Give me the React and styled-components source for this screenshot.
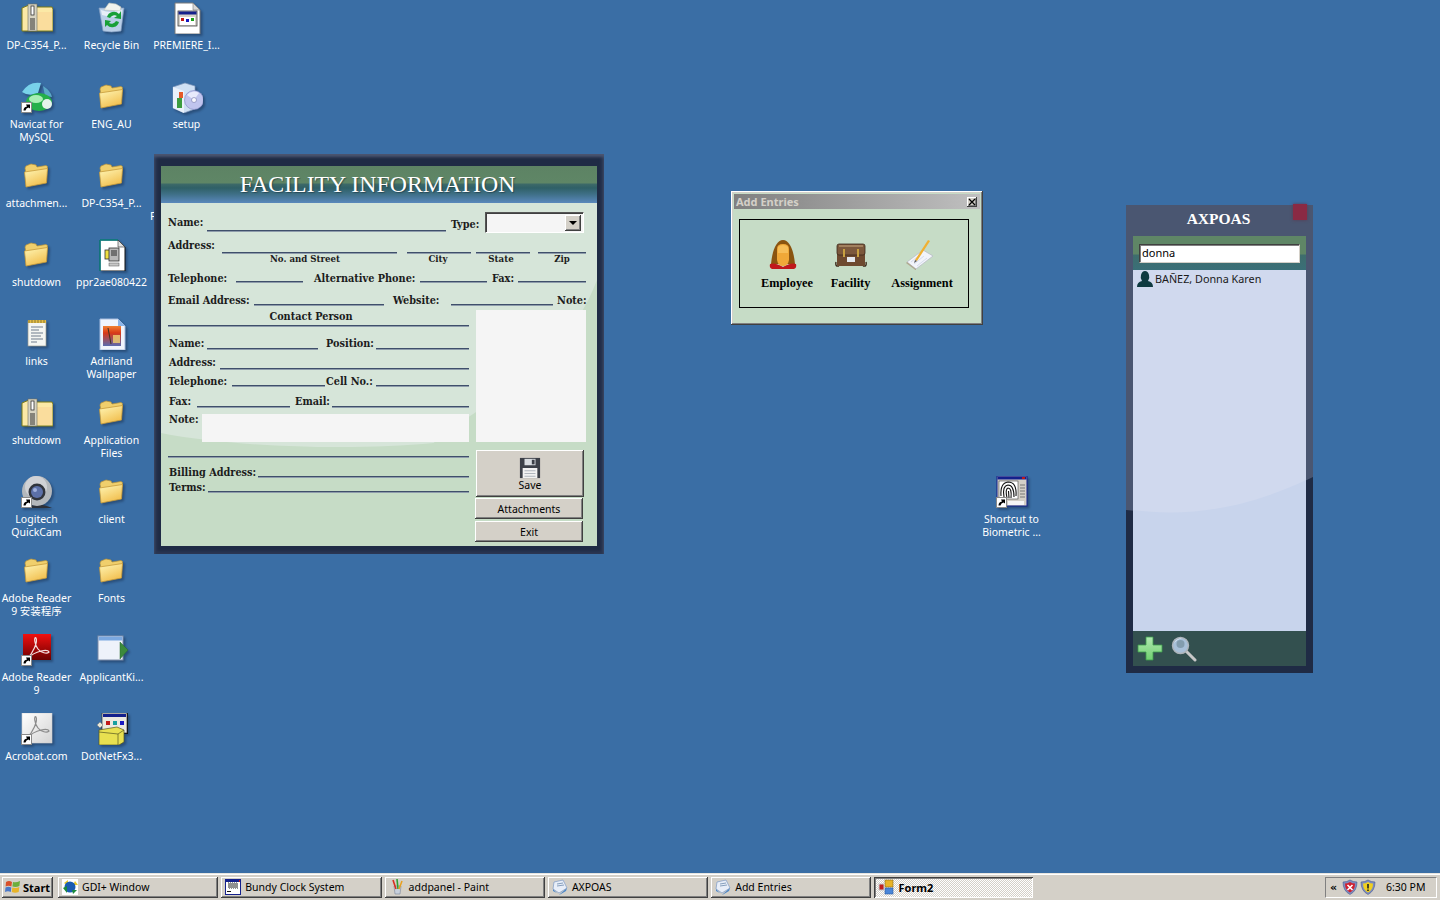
import React from 'react';
import styled, { createGlobalStyle } from 'styled-components';

const GlobalStyle = createGlobalStyle`
  html, body {
    margin: 0;
    height: 100%;
    overflow: hidden;
    background: #3a6ea5;
  }
  body {
    font-family: "Noto Sans", "Noto Sans CJK SC", sans-serif;
    font-size: 10.5px;
  }
`

const UI_FONT = '"Noto Sans", "Noto Sans CJK SC", sans-serif'
const SLAB_FONT = '"DejaVu Serif Condensed", "DejaVu Serif", serif'

const raised = `
  background: #d4d0c8;
  box-shadow: inset -1px -1px #404040, inset 1px 1px #ffffff, inset -2px -2px #808080, inset 2px 2px #d4d0c8;
`

/* ---------- desktop ---------- */
const Screen = styled.div`
  position: relative;
  width: 1440px;
  height: 900px;
  overflow: hidden;
  background: #3a6ea5;
`
const IconGrid = styled.div`
  display: grid;
  grid-template-rows: repeat(10, 79px);
  grid-auto-columns: 75px;
  grid-auto-flow: column;
  padding-top: 2px;
  margin-left: -1px;
  width: max-content;
`
const IconCell = styled.div`
  display: flex;
  flex-direction: column;
  align-items: center;
  width: 75px;
  ${p => p.$free && `
    position: absolute;
    left: ${p.$x}px;
    top: ${p.$y}px;
  `}
`
const IconBox = styled.div`
  position: relative;
  width: 32px;
  height: 32px;
  filter: drop-shadow(2px 2px 1px rgba(20, 40, 70, 0.45));
  svg { display: block; }
`
const ShortcutBadge = styled.svg`
  position: absolute;
  left: 0;
  bottom: 0;
`
const IconLabel = styled.div`
  margin-top: 5px;
  width: 73px;
  color: #ffffff;
  text-align: center;
  font-size: 10.5px;
  line-height: 13px;
`
const StrayLetter = styled.div`
  position: absolute;
  left: 150px;
  top: 209px;
  color: #ffffff;
  font-size: 11px;
  line-height: 13px;
`

/* ---------- facility form ---------- */
const FormFrame = styled.div`
  position: absolute;
  left: 154px;
  top: 154px;
  box-sizing: border-box;
  width: 450px;
  height: 400px;
  padding: 12px 7px 8px 7px;
  background: #1f2b45;
  box-shadow: inset 0 3px 3px #4b5671, inset 3px 0 3px #2b3753, inset -3px 0 3px #2b3753, inset 0 -3px 3px #2b3753;
`
const FormInner = styled.div`
  position: relative;
  display: flex;
  flex-direction: column;
  height: 380px;
  background: #d6e5d9;
`
const FormHeader = styled.div`
  display: flex;
  justify-content: center;
  align-items: center;
  height: 37px;
  padding-right: 3px;
  background: linear-gradient(#5d8364 0, #5f8666 17px, #3d6a68 18px, #2f6067 22px, #3e6f86 28px, #5a88bc 37px);
  color: #ffffff;
  font-family: "Liberation Serif", serif;
  font-size: 23.8px;
  line-height: 37px;
  text-shadow: 1px 1px 1px rgba(20, 40, 50, 0.5);
  white-space: nowrap;
  position: relative;
  z-index: 1;
`
const WaveSvg = styled.svg`
  position: absolute;
  left: 0;
  top: 0;
  width: 100%;
  height: 100%;
`
const FormBody = styled.div`
  position: relative;
  z-index: 1;
  padding: 9px 0 0 7px;
  font-family: ${SLAB_FONT};
  font-size: 10.8px;
  font-weight: 700;
  color: #1c1c1c;
`
const Row = styled.div`
  display: flex;
  height: ${p => p.$h}px;
`
const Label = styled.div`
  box-sizing: border-box;
  flex: none;
  width: ${p => p.$w}px;
  height: 14px;
  margin-top: ${p => p.$top || 0}px;
  margin-left: ${p => p.$ml || 0}px;
  line-height: 16px;
  white-space: nowrap;
`
const Line = styled.div`
  flex: none;
  box-sizing: border-box;
  width: ${p => p.$w}px;
  height: 2px;
  margin-top: ${p => p.$top || 0}px;
  margin-left: ${p => p.$ml || 0}px;
  background: #3f4f6b;
  border-bottom: 1px solid #8e9cab;
`
const Caption = styled.div`
  flex: none;
  width: ${p => p.$w}px;
  margin-left: ${p => p.$ml || 0}px;
  text-align: center;
  font-size: 9.6px;
  line-height: 10px;
  white-space: nowrap;
`
const Select = styled.div`
  box-sizing: border-box;
  display: flex;
  justify-content: flex-end;
  align-items: center;
  width: 99px;
  height: 21px;
  padding: 2px;
  background: #f5f5f5;
  border: 1px solid;
  border-color: #555555 #ffffff #ffffff #555555;
  box-shadow: inset 1px 1px #404040;
`
const SelectArrow = styled.div`
  ${raised}
  display: flex;
  align-items: center;
  justify-content: center;
  width: 16px;
  height: 16px;
  &::after {
    content: '';
    border: 4px solid transparent;
    border-top: 4px solid #000000;
    border-bottom: 0;
  }
`
const Columns = styled.div`
  display: flex;
  gap: 6px;
`
const LeftCol = styled.div`
  width: 301px;
  flex: none;
`
const RightCol = styled.div`
  display: flex;
  flex-direction: column;
  width: 111px;
  flex: none;
`
const Heading = styled.div`
  height: 17px;
  padding-right: 15px;
  text-align: center;
  line-height: 18px;
`
const WhiteBox = styled.div`
  flex: none;
  width: ${p => p.$w}px;
  height: ${p => p.$h}px;
  margin-top: ${p => p.$top || 0}px;
  margin-left: ${p => p.$ml || 0}px;
  background: #f5f5f5;
`
const Button = styled.div`
  ${raised}
  display: flex;
  flex-direction: column;
  align-items: center;
  justify-content: center;
  box-sizing: border-box;
  width: 108px;
  height: ${p => p.$h}px;
  padding-top: 1px;
  margin-top: ${p => p.$top || 0}px;
  margin-left: ${p => p.$ml || 0}px;
  font-family: ${UI_FONT};
  font-weight: 400;
  font-size: 10.5px;
  line-height: 13px;
  color: #000000;
`

/* ---------- add entries ---------- */
const AddWindow = styled.div`
  position: absolute;
  left: 731px;
  top: 191px;
  box-sizing: border-box;
  width: 252px;
  height: 134px;
  padding: 3px;
  background: #c6dcc6;
  box-shadow: inset -1px -1px #404040, inset 1px 1px #ffffff, inset -2px -2px #808080, inset 2px 2px #d4d0c8;
`
const TitleBar = styled.div`
  display: flex;
  align-items: center;
  justify-content: space-between;
  height: 15px;
  padding: 0 3px 0 2px;
  background: linear-gradient(90deg, #808080, #c0c0c0);
  color: #d4d0c8;
  font-family: ${UI_FONT};
  font-size: 11px;
  font-weight: 700;
  line-height: 15px;
`
const CloseButton = styled.div`
  ${raised}
  display: flex;
  align-items: center;
  justify-content: center;
  width: 10px;
  height: 10px;
`
const EntryBox = styled.div`
  box-sizing: border-box;
  display: flex;
  gap: 18px;
  height: 89px;
  margin: 10px 11px 0 5px;
  padding: 18px 0 0 22px;
  border: 1px solid #000000;
`
const Entry = styled.div`
  display: flex;
  flex-direction: column;
  align-items: center;
  gap: 6px;
  width: ${p => p.$w}px;
  font-family: "Liberation Serif", serif;
  font-size: 12.3px;
  font-weight: 700;
  line-height: 14px;
  color: #000000;
  white-space: nowrap;
  svg {
    transform: translateX(${p => p.$shift || 0}px);
  }
`

/* ---------- axpoas panel ---------- */
const Panel = styled.div`
  position: absolute;
  left: 1126px;
  top: 205px;
  box-sizing: border-box;
  display: flex;
  flex-direction: column;
  width: 187px;
  height: 468px;
  padding: 0 7px 7px 7px;
  background: #4a5671;
`
const PanelTitle = styled.div`
  position: relative;
  height: 31px;
  padding-top: 1px;
  padding-right: 2px;
  box-sizing: border-box;
  text-align: center;
  color: #ffffff;
  font-family: "Liberation Serif", serif;
  font-size: 15.5px;
  font-weight: 700;
  line-height: 26px;
`
const PanelClose = styled.div`
  position: absolute;
  right: -1px;
  top: -1px;
  width: 14px;
  height: 16px;
  background: #8a2a44;
  box-shadow: 0 0 3px #5d3a50;
`
const SearchBar = styled.div`
  position: relative;
  box-sizing: border-box;
  height: 34px;
  padding: 8px 6px 0 6px;
  background: linear-gradient(#5f8666 0, #5f8666 18px, #3e6d6c 19px, #3a6f78 34px);
`
const SearchInput = styled.div`
  box-sizing: border-box;
  width: 161px;
  height: 19px;
  padding-left: 2px;
  background: #ffffff;
  border: 1px solid;
  border-color: #404040 #d4d0c8 #d4d0c8 #404040;
  box-shadow: inset 1px 1px #808080;
  color: #000000;
  font-size: 11px;
  line-height: 16px;
`
const List = styled.div`
  position: relative;
  flex: 1;
  background: #d0d9ee;
`
const ListRow = styled.div`
  position: relative;
  display: flex;
  align-items: center;
  gap: 2px;
  height: 17px;
  padding-left: 4px;
  color: #1a1a1a;
  font-size: 10.8px;
`
const PanelFooter = styled.div`
  position: relative;
  display: flex;
  align-items: center;
  gap: 8px;
  height: 35px;
  padding-left: 4px;
  background: #33504f;
`

/* ---------- taskbar ---------- */
const Taskbar = styled.div`
  position: absolute;
  left: 0;
  right: 0;
  bottom: 0;
  box-sizing: border-box;
  display: flex;
  gap: 3px;
  height: 27px;
  padding: 3px 3px 3px 2px;
  background: #d4d0c8;
  border-top: 1px solid #e8e6e0;
  box-shadow: inset 0 1px #ffffff;
`
const StartButton = styled.div`
  ${raised}
  display: flex;
  align-items: center;
  gap: 2px;
  box-sizing: border-box;
  width: 51px;
  height: 21px;
  margin-right: 2px;
  padding: 0 0 1px 3px;
  font-family: ${UI_FONT};
  font-size: 11px;
  font-weight: 700;
  color: #000000;
`
const TaskButton = styled.div`
  ${raised}
  display: flex;
  align-items: center;
  gap: 4px;
  box-sizing: border-box;
  width: ${p => (p.$active ? 159 : 160.3)}px;
  height: 21px;
  padding: 0 0 1px 4px;
  color: #000000;
  font-size: 10.5px;
  white-space: nowrap;
  ${p => p.$active && `
    font-size: 11px;
    font-weight: 700;
    background-color: #f0eeea;
    background-image: repeating-conic-gradient(#ffffff 0 25%, #d4d0c8 0 50%);
    background-size: 2px 2px;
    box-shadow: inset 1px 1px #404040, inset -1px -1px #ffffff, inset 2px 2px #808080;
  `}
`
const Tray = styled.div`
  display: flex;
  align-items: center;
  box-sizing: border-box;
  width: 112px;
  height: 21px;
  margin-left: auto;
  padding: 0 0 1px 4px;
  border: 1px solid;
  border-color: #808080 #ffffff #ffffff #808080;
  font-size: 10.5px;
  color: #000000;
`
const TrayChevron = styled.span`
  width: 12px;
  font-family: "DejaVu Sans", sans-serif;
  font-weight: 700;
  font-size: 11px;
`
const TrayIcons = styled.div`
  display: flex;
  gap: 2px;
`
const TrayTime = styled.span`
  margin-left: 10px;
`

/* ---------- icons ---------- */
const Svg = ({ size = 32, vb = 32, children }) => (
  <svg width={size} height={size} viewBox={`0 0 ${vb} ${vb}`}>{children}</svg>
)

const FolderIcon = () => (
  <Svg>
    <defs>
      <linearGradient id="fld" x1="0" y1="0" x2="0.5" y2="1">
        <stop offset="0" stopColor="#fff7b8" />
        <stop offset="1" stopColor="#f2c050" />
      </linearGradient>
    </defs>
    <g transform="translate(-1 -1)">
      <path d="M5 9 L6 7 L11 5 L16 6 L17 8 L26 6.5 L27.5 7.5 L27 12 L6 15 Z" fill="#f0cf6c" stroke="#b8923a" strokeWidth=".7" />
      <path d="M4.5 13 L27.5 9.5 L26.5 24 L6 28 Z" fill="url(#fld)" stroke="#c79a3a" strokeWidth=".8" />
    </g>
  </Svg>
)
const ZipIcon = () => (
  <Svg>
    <path d="M1 29 L1 6 L8 3 L14 3 L15 5 L31 5 L32 7 L32 29 Z" fill="#fbe9a6" stroke="#7c7a16" strokeWidth="1" />
    <path d="M15 10 H31 V28 H15 Z" fill="#f9d79a" opacity=".7" />
    <rect x="7" y="2" width="9" height="27" fill="#d8d4c2" stroke="#6f6f60" strokeWidth=".6" />
    <rect x="10" y="4" width="3" height="9" fill="#ffffff" stroke="#333333" strokeWidth=".8" />
    <path d="M9 17 h5 M9 19 h5 M9 21 h5 M9 23 h5 M9 25 h5 M9 27 h5" stroke="#333333" strokeWidth="1" />
  </Svg>
)
const RecycleIcon = () => (
  <Svg>
    <path d="M3 6 L28 6 L25 29 Q15 31 7 29 Z" fill="#b9cfe8" stroke="#7e99bd" strokeWidth=".7" />
    <path d="M8 8 L13 1 L20 2 L25 5 L24 9 Z" fill="#f2f4ee" stroke="#c0c4b8" strokeWidth=".6" />
    <path d="M5 8 Q15 12 26 8 L25 14 Q15 16 6 13 Z" fill="#e8eff8" />
    <path d="M11 15 A7 7 0 0 1 23 12 L25 9 L25 17 L18 16 L21 14 A5 5 0 0 0 14 16 Z M23 20 A7 7 0 0 1 11 23 L9 25 L9 18 L15 19 L13 21 A5 5 0 0 0 20 19 Z" fill="#18a038" />
  </Svg>
)
const ExeDocIcon = () => (
  <Svg>
    <path d="M4 1 H22 L29 8 V32 H4 Z" fill="#ffffff" stroke="#7a7a7a" strokeWidth="1" />
    <path d="M22 1 V8 H29 Z" fill="#d8d8d8" stroke="#7a7a7a" strokeWidth=".6" />
    <rect x="7" y="9" width="19" height="15" fill="#d4d0c8" stroke="#444444" strokeWidth=".8" />
    <rect x="7.5" y="9.5" width="18" height="3" fill="#14208c" />
    <rect x="9" y="15" width="15" height="8" fill="#ffffff" />
    <rect x="10" y="16" width="3" height="3" fill="#c01818" />
    <rect x="15" y="17" width="3" height="3" fill="#1818c0" />
    <rect x="20" y="16" width="3" height="3" fill="#18a018" />
  </Svg>
)
const NavicatIcon = () => (
  <Svg>
    <path d="M1 11 Q8 0 20 2 L17 12 Q8 16 1 11 Z" fill="#78d2ea" />
    <path d="M22 5 Q30 10 31 16 L24 15 Z" fill="#5aa8c8" />
    <ellipse cx="18" cy="21" rx="13" ry="9" fill="#24b04a" />
    <ellipse cx="15" cy="18" rx="7" ry="4" fill="#a8efb4" />
    <ellipse cx="26" cy="23" rx="5" ry="5" fill="#e4f4ec" />
  </Svg>
)
const SetupIcon = () => (
  <Svg>
    <path d="M2 6 L14 2 L24 5 L24 28 L13 32 L2 27 Z" fill="#cfe0f4" stroke="#7c95b8" strokeWidth=".7" />
    <path d="M2 6 L13 10 L13 32 L2 27 Z" fill="#e9f1fb" />
    <rect x="6" y="17" width="5" height="10" fill="#3c9c40" />
    <rect x="8" y="11" width="4" height="6" fill="#e45a2a" />
    <circle cx="23" cy="19" r="9.5" fill="#c0c4ee" stroke="#8084c0" strokeWidth=".6" />
    <path d="M23 19 L16 14 A9 9 0 0 1 28 12 Z" fill="#e8eafc" />
    <circle cx="23" cy="19" r="2.5" fill="#f8f8ff" stroke="#7074a8" strokeWidth=".6" />
  </Svg>
)
const PprIcon = () => (
  <Svg>
    <path d="M4 1 H22 L29 8 V32 H4 Z" fill="#ffffff" stroke="#111111" strokeWidth="1" />
    <path d="M4 1 H22 M4 1 V32" stroke="#0e8a8a" strokeWidth="1.4" fill="none" />
    <path d="M22 1 V8 H29 Z" fill="#e0e0e0" stroke="#333333" strokeWidth=".6" />
    <rect x="9" y="11" width="10" height="9" fill="#f0e040" stroke="#333333" strokeWidth=".8" />
    <rect x="13" y="9" width="10" height="13" fill="#b8b8b8" stroke="#333333" strokeWidth=".8" />
    <rect x="15" y="11" width="6" height="6" fill="#707070" />
    <rect x="13" y="24" width="10" height="3" fill="#c8c8c8" stroke="#555555" strokeWidth=".5" />
  </Svg>
)
const NotepadIcon = () => (
  <Svg>
    <rect x="7" y="3" width="18" height="25" fill="#f4f6f2" stroke="#9a9a90" strokeWidth=".7" />
    <rect x="7" y="2" width="18" height="3" fill="#e2bc48" />
    <path d="M8 2 v3 M11 2 v3 M14 2 v3 M17 2 v3 M20 2 v3 M23 2 v3" stroke="#7a6a28" strokeWidth=".8" />
    <path d="M10 9 h12 M10 12 h8 M10 15 h12 M10 18 h10 M10 21 h12 M10 24 h6" stroke="#6e7c8c" strokeWidth="1" />
  </Svg>
)
const ImageDocIcon = () => (
  <Svg>
    <defs>
      <linearGradient id="sun" x1="0" y1="0" x2="0" y2="1">
        <stop offset="0" stopColor="#f08030" />
        <stop offset=".35" stopColor="#d83818" />
        <stop offset="1" stopColor="#5a6ab0" />
      </linearGradient>
    </defs>
    <path d="M4 1 H22 L29 8 V32 H4 Z" fill="#f0f4fc" stroke="#a6bde0" strokeWidth="1" />
    <path d="M22 1 V8 H29 Z" fill="#8ab4e8" />
    <rect x="7" y="8" width="18" height="20" fill="url(#sun)" />
    <rect x="17" y="17" width="7" height="8" fill="#f0d070" opacity=".8" />
    <path d="M12 10 L15 26" stroke="#40301c" strokeWidth="1" />
  </Svg>
)
const WebcamIcon = () => (
  <Svg>
    <path d="M6 32 Q16 25 31 32 Z" fill="#2c3038" />
    <circle cx="16" cy="15" r="15" fill="#b4b8bc" />
    <circle cx="15" cy="11" r="11" fill="#d0d2d6" />
    <circle cx="16" cy="16" r="8.5" fill="#30343c" />
    <circle cx="16" cy="16" r="6" fill="#5c70a8" />
    <circle cx="14" cy="14" r="2" fill="#a0b0dc" />
  </Svg>
)
const AcrobatSwirl = ({ color, w = 1.2 }) => (
  <path d="M6 25 C12 19 17 8 15 4 C13 2 13 10 17 15 C20 19 26 20 28 18 C27 15 15 16 6 25 Z" fill="none" stroke={color} strokeWidth={w} />
)
const PdfIcon = () => (
  <Svg>
    <defs>
      <linearGradient id="pdf" x1="0" y1="0" x2="0" y2="1">
        <stop offset="0" stopColor="#f01010" />
        <stop offset="1" stopColor="#6c0000" />
      </linearGradient>
    </defs>
    <rect x="2" y="0" width="28" height="26" fill="url(#pdf)" />
    <AcrobatSwirl color="#f4dede" />
  </Svg>
)
const AcrobatIcon = () => (
  <Svg>
    <defs>
      <linearGradient id="acr" x1="0" y1="0" x2="1" y2="1">
        <stop offset="0" stopColor="#ffffff" />
        <stop offset="1" stopColor="#d4d4d4" />
      </linearGradient>
    </defs>
    <rect x="1" y="0" width="30" height="30" fill="url(#acr)" stroke="#d0d0d0" strokeWidth=".6" />
    <AcrobatSwirl color="#8c8c8c" />
  </Svg>
)
const KitIcon = () => (
  <Svg>
    <rect x="2" y="2" width="25" height="24" fill="#eef2fa" stroke="#7d8ca8" strokeWidth="1" />
    <rect x="2.5" y="2.5" width="24" height="4" fill="#7aa8e0" />
    <path d="M24 8 L32 16 L24 25 Z" fill="#3c8a3c" stroke="#2a6a2a" strokeWidth=".5" />
  </Svg>
)
const DotNetIcon = () => (
  <Svg>
    <rect x="7" y="0" width="26" height="21" fill="#000000" opacity=".85" />
    <rect x="6" y="0" width="25" height="20" fill="#ebe9e0" stroke="#333333" strokeWidth=".7" />
    <rect x="7" y="1" width="23" height="3" fill="#14208c" />
    <rect x="10" y="8" width="4" height="4" fill="#c01818" />
    <rect x="17" y="8" width="4" height="4" fill="#18a0a0" />
    <rect x="24" y="8" width="4" height="4" fill="#1818c0" />
    <path d="M3 17 L21 14 L28 17 L28 29 L23 32 L3 32 Z" fill="#e8e050" stroke="#555520" strokeWidth=".7" />
    <path d="M3 19 L22 21 L22 32 M22 21 L28 17" fill="none" stroke="#555520" strokeWidth=".7" />
    <path d="M1 12 L4 9 L7 12 L4 15 Z" fill="#e8e8d8" stroke="#777777" strokeWidth=".5" />
  </Svg>
)
const FingerIcon = () => (
  <Svg>
    <rect x="1" y="0" width="30" height="30" fill="#d4d0c8" stroke="#14208c" strokeWidth="1" />
    <rect x="1.5" y="0.5" width="29" height="3" fill="#14208c" />
    <rect x="26" y="1" width="3" height="2" fill="#c01818" />
    <rect x="3" y="5" width="19" height="18" fill="#ffffff" stroke="#222222" strokeWidth=".5" />
    <path d="M5 20 Q4 7 12 6 Q21 6 20 20 M8 21 Q6 10 12 9 Q18 9 18 21 M11 22 Q9 13 12 12 Q16 12 15 22 M12.5 15 L13 22" fill="none" stroke="#111111" strokeWidth="1.1" />
    <path d="M24 9 h5 M24 12 h5 M24 15 h5 M24 18 h5 M24 21 h5" stroke="#777777" strokeWidth="1.2" />
    <rect x="12" y="25" width="16" height="4" fill="#f6f6f6" />
  </Svg>
)
const Shortcut = () => (
  <ShortcutBadge width="11" height="11" viewBox="0 0 11 11">
    <rect x=".5" y=".5" width="10" height="10" fill="#ffffff" stroke="#888888" strokeWidth="1" />
    <path d="M2.5 8.5 Q2.5 5 6 4.5 L5 2.5 L9 2.5 L9 6.5 L7.5 5.5 Q5 6 4.5 8.5 Z" fill="#000000" />
  </ShortcutBadge>
)

const EmployeeIcon = () => (
  <Svg>
    <path d="M4 26 C5 14 9 2 16 2 C23 2 27 14 28 26 Z" fill="#8a5410" />
    <path d="M3 26 Q8 24 16 29 Q24 24 29 26 Q30 30 27 31 L5 31 Q2 30 3 26 Z" fill="#c0181c" />
    <path d="M10 11 Q10 6 16 6 Q22 6 22 11 L22 22 Q21 28 16 28 Q11 28 10 22 Z" fill="#f0a838" />
    <path d="M11 9 Q16 5 21 9 L21 15 L11 15 Z" fill="#f7be58" />
  </Svg>
)
const FacilityIcon = () => (
  <Svg>
    <path d="M1 24 Q0 29 4 28" fill="none" stroke="#3c2a1c" strokeWidth="1.4" />
    <path d="M31 24 Q32 29 28 28" fill="none" stroke="#3c2a1c" strokeWidth="1.4" />
    <rect x="2" y="14" width="28" height="14" rx="1" fill="#6e4a30" />
    <rect x="2" y="6" width="28" height="11" rx="2" fill="#7c583c" stroke="#3c2a1c" strokeWidth=".8" />
    <rect x="4" y="7" width="24" height="2" fill="#a2805e" />
    <rect x="8" y="11" width="2" height="8" fill="#c8a040" />
    <rect x="22" y="11" width="2" height="8" fill="#c8a040" />
    <rect x="12" y="19" width="8" height="5" fill="#e4e8ee" />
  </Svg>
)
const AssignmentIcon = () => (
  <Svg>
    <path d="M4 24 L20 12 L30 18 L13 31 Z" fill="#f2f4fa" stroke="#b4b8c4" strokeWidth=".7" />
    <path d="M4 24 L13 31 L13 32.5 L3 25 Z" fill="#b0a890" />
    <path d="M8 24 L18 16 M11 26 L21 18 M14 28 L24 20" stroke="#cfd6e8" strokeWidth=".8" />
    <path d="M12 22 L25 2 L27 3 L14 23 Z" fill="#f0b030" />
    <path d="M12 22 L14 23 L11 25 Z" fill="#555555" />
  </Svg>
)
const SaveIcon = () => (
  <Svg size={22} vb={24}>
    <path d="M1 1 H23 V23 H1 Z" fill="#3c4048" />
    <rect x="6" y="2" width="12" height="7" fill="#d8dce0" />
    <rect x="14" y="3" width="3" height="5" fill="#3c4048" />
    <rect x="4" y="12" width="16" height="11" fill="#f2f2f2" />
    <path d="M6 15 h12 M6 18 h12 M6 21 h12" stroke="#aab0b8" strokeWidth="1" />
  </Svg>
)
const PersonIcon = () => (
  <Svg size={16} vb={16}>
    <path d="M0 16 Q0 11 5 10 Q3 7 4 4 Q5 0 8 0 Q11 0 12 4 Q13 7 11 10 Q16 11 16 16 Z" fill="#0e3a40" />
  </Svg>
)
const AddIcon = () => (
  <Svg size={26} vb={26}>
    <defs>
      <linearGradient id="plus" x1="0" y1="0" x2="0" y2="1">
        <stop offset="0" stopColor="#b0e8b0" />
        <stop offset="1" stopColor="#70d070" />
      </linearGradient>
    </defs>
    <path d="M9 1 H16 V9 H25 V16 H16 V24 H9 V16 H1 V9 H9 Z" fill="url(#plus)" stroke="#3c9c4c" strokeWidth=".8" />
  </Svg>
)
const FindIcon = () => (
  <Svg size={26} vb={26}>
    <path d="M15 15 L24 24" stroke="#c8c8c8" strokeWidth="3" strokeLinecap="round" />
    <circle cx="9.5" cy="9.5" r="8" fill="#a8c0d8" stroke="#aeb4ba" strokeWidth="1.4" />
    <path d="M3 8 A7 7 0 0 1 12 3 A8 8 0 0 0 3 8 Z" fill="#ffffff" />
    <circle cx="9.5" cy="8" r="4" fill="#64808c" opacity=".55" />
  </Svg>
)
const CloseGlyph = () => (
  <svg width="8" height="8" viewBox="0 0 8 8">
    <path d="M1 1 L7 7 M7 1 L1 7" stroke="#000000" strokeWidth="1.3" />
  </svg>
)

const FlagIcon = () => (
  <Svg size={16} vb={16}>
    <path d="M1 3 Q4 1 7 3 L6.4 7.5 Q3.5 6 .6 7.5 Z" fill="#d8502a" />
    <path d="M8 3 Q11 4 15 2 L14.4 7 Q11 8.5 7.4 7.5 Z" fill="#6cae3c" />
    <path d="M.5 8.5 Q3.5 7 6.3 8.5 L5.8 13 Q3 11.5 0 13 Z" fill="#4a78c8" />
    <path d="M7.3 8.5 Q11 9.5 14.3 8 L13.7 13 Q10 14.5 6.8 13 Z" fill="#e8b428" />
  </Svg>
)
const GdiIcon = () => (
  <Svg size={16} vb={16}>
    <rect x="0" y="0" width="16" height="16" fill="#ffffff" />
    <path d="M2 4 L6 1 L6 7 Z M13 2 L16 6 L11 6 Z" fill="#e8c828" />
    <circle cx="8" cy="8" r="5.5" fill="#1a5cb0" />
    <path d="M1 9 L5 7 L5 14 Z M10 11 L15 11 L11 15 Z" fill="#1a8a3c" />
  </Svg>
)
const BundyIcon = () => (
  <Svg size={16} vb={16}>
    <rect x=".5" y=".5" width="15" height="15" fill="#ffffff" stroke="#14208c" strokeWidth="1" />
    <rect x="1" y="1" width="14" height="2" fill="#14208c" />
    <rect x="14" y="1" width="1" height="2" fill="#c01818" />
    <path d="M3 4 h9 M4 5 h9 M3 6 h9 M4 7 h9 M3 8 h9 M4 9 h9" stroke="#222222" strokeWidth="1" strokeDasharray="1 1" />
    <rect x="2" y="12" width="4" height="1" fill="#111111" />
  </Svg>
)
const PaintIcon = () => (
  <Svg size={16} vb={16}>
    <path d="M5 7 H12 L11 15 H6 Z" fill="#c8d0dc" stroke="#7a8498" strokeWidth=".6" />
    <path d="M4 1 L7 10" stroke="#d83020" strokeWidth="1.6" />
    <path d="M8 0 L9 10" stroke="#30a030" strokeWidth="1.6" />
    <path d="M13 2 L10 10" stroke="#e8a020" strokeWidth="1.6" />
  </Svg>
)
const AppDocIcon = () => (
  <Svg size={16} vb={16}>
    <path d="M2 3 L11 1 L15 9 L7 14 L1 10 Z" fill="#e8eef8" stroke="#7c9ac4" strokeWidth=".7" />
    <path d="M1 10 Q5 15 8 15 L15 9 L14 12 L8 15.5 L1 12 Z" fill="#4a86c8" />
    <path d="M5 5 L11 4 M5 7 L12 6" stroke="#6c8aac" strokeWidth=".8" />
  </Svg>
)
const FormIcon = () => (
  <Svg size={16} vb={16}>
    <rect x="7" y="1" width="8" height="7" fill="#e8b428" stroke="#8a6a18" strokeWidth=".6" />
    <rect x="7" y="9" width="8" height="6" fill="#4a86d8" stroke="#2a5aa0" strokeWidth=".6" />
    <rect x="1" y="5" width="5" height="6" fill="#c02020" stroke="#c8c8c8" strokeWidth="1" />
  </Svg>
)
const ShieldIcon = ({ color, mark }) => (
  <Svg size={16} vb={16}>
    <path d="M8 1 Q11 3 15 3 Q15 12 8 15.5 Q1 12 1 3 Q5 3 8 1 Z" fill="#7c8cc0" stroke="#4a5a90" strokeWidth=".6" />
    <path d="M8 3 Q10.5 4.5 13 4.5 Q13 11 8 13.5 Q3 11 3 4.5 Q5.5 4.5 8 3 Z" fill={color} />
    {mark === 'x'
      ? <path d="M5.5 6 L10.5 11 M10.5 6 L5.5 11" stroke="#ffffff" strokeWidth="1.6" />
      : <path d="M8 5 V9.5 M8 10.5 V12" stroke="#222222" strokeWidth="1.6" />}
  </Svg>
)

/* ---------- data ---------- */
const desktopIcons = [
  { label: 'DP-C354_P...', icon: <ZipIcon /> },
  { label: 'Navicat for MySQL', icon: <NavicatIcon />, shortcut: true },
  { label: 'attachmen...', icon: <FolderIcon /> },
  { label: 'shutdown', icon: <FolderIcon /> },
  { label: 'links', icon: <NotepadIcon /> },
  { label: 'shutdown', icon: <ZipIcon /> },
  { label: 'Logitech QuickCam', icon: <WebcamIcon />, shortcut: true },
  { label: 'Adobe Reader 9 安装程序', icon: <FolderIcon /> },
  { label: 'Adobe Reader 9', icon: <PdfIcon />, shortcut: true },
  { label: 'Acrobat.com', icon: <AcrobatIcon />, shortcut: true },
  { label: 'Recycle Bin', icon: <RecycleIcon /> },
  { label: 'ENG_AU', icon: <FolderIcon /> },
  { label: 'DP-C354_P...', icon: <FolderIcon /> },
  { label: 'ppr2ae080422', icon: <PprIcon /> },
  { label: 'Adriland Wallpaper', icon: <ImageDocIcon /> },
  { label: 'Application Files', icon: <FolderIcon /> },
  { label: 'client', icon: <FolderIcon /> },
  { label: 'Fonts', icon: <FolderIcon /> },
  { label: 'ApplicantKi...', icon: <KitIcon /> },
  { label: 'DotNetFx3...', icon: <DotNetIcon /> },
  { label: 'PREMIERE_I...', icon: <ExeDocIcon /> },
  { label: 'setup', icon: <SetupIcon /> },
]

const taskButtons = [
  { label: 'GDI+ Window', icon: <GdiIcon /> },
  { label: 'Bundy Clock System', icon: <BundyIcon /> },
  { label: 'addpanel - Paint', icon: <PaintIcon /> },
  { label: 'AXPOAS', icon: <AppDocIcon /> },
  { label: 'Add Entries', icon: <AppDocIcon /> },
  { label: 'Form2', icon: <FormIcon />, active: true },
]

const DesktopIcon = ({ item, ...rest }) => (
  <IconCell {...rest}>
    <IconBox>
      {item.icon}
      {item.shortcut && <Shortcut />}
    </IconBox>
    <IconLabel>{item.label}</IconLabel>
  </IconCell>
)

const FacilityForm = () => (
  <FormFrame>
    <FormInner>
      <WaveSvg viewBox="0 0 435 380" preserveAspectRatio="none">
        <path d="M0 267 C70 281 190 285 272 277 C310 242 400 207 435 114 L435 380 L0 380 Z" fill="#c6dcc6" />
      </WaveSvg>
      <FormHeader>FACILITY INFORMATION</FormHeader>
      <FormBody>
        <Row $h={22}>
          <Label $w={39} $top={3}>Name:</Label>
          <Line $w={239} $top={18} />
          <Label $w={34} $ml={5} $top={5}>Type:</Label>
          <Select><SelectArrow /></Select>
        </Row>
        <Row $h={20}>
          <Label $w={54} $top={4}>Address:</Label>
          <Line $w={175} $top={18} />
          <Line $w={64} $ml={10} $top={18} />
          <Line $w={54} $ml={5} $top={18} />
          <Line $w={48} $ml={8} $top={18} />
        </Row>
        <Row $h={10}>
          <Caption $w={166} $ml={54}>No. and Street</Caption>
          <Caption $w={60} $ml={20}>City</Caption>
          <Caption $w={46} $ml={10}>State</Caption>
          <Caption $w={40} $ml={18}>Zip</Caption>
        </Row>
        <Row $h={22}>
          <Label $w={68} $top={7}>Telephone:</Label>
          <Line $w={67} $top={17} />
          <Label $w={106} $ml={11} $top={7}>Alternative Phone:</Label>
          <Line $w={67} $top={17} />
          <Label $w={26} $ml={5} $top={7}>Fax:</Label>
          <Line $w={68} $top={17} />
        </Row>
        <Row $h={22}>
          <Label $w={86} $top={7}>Email Address:</Label>
          <Line $w={130} $top={18} />
          <Label $w={58} $ml={9} $top={7}>Website:</Label>
          <Line $w={102} $top={18} />
          <Label $w={29} $ml={4} $top={7}>Note:</Label>
        </Row>
        <Columns>
          <LeftCol>
            <Heading>Contact Person</Heading>
            <Line $w={301} />
            <Row $h={23}>
              <Label $w={38} $ml={1} $top={9}>Name:</Label>
              <Line $w={111} $top={21} />
              <Label $w={50} $ml={8} $top={9}>Position:</Label>
              <Line $w={93} $top={21} />
            </Row>
            <Row $h={20}>
              <Label $w={51} $ml={1} $top={5}>Address:</Label>
              <Line $w={249} $top={18} />
            </Row>
            <Row $h={17}>
              <Label $w={64} $top={4}>Telephone:</Label>
              <Line $w={93} $top={15} />
              <Label $w={50} $ml={1} $top={4}>Cell No.:</Label>
              <Line $w={93} $top={15} />
            </Row>
            <Row $h={21}>
              <Label $w={28} $ml={1} $top={7}>Fax:</Label>
              <Line $w={93} $top={19} />
              <Label $w={37} $ml={5} $top={7}>Email:</Label>
              <Line $w={137} $top={19} />
            </Row>
            <Row $h={34}>
              <Label $w={33} $ml={1} $top={4}>Note:</Label>
              <WhiteBox $w={267} $h={28} $top={6} />
            </Row>
            <Line $w={301} $top={14} />
            <Row $h={20}>
              <Label $w={89} $ml={1} $top={7}>Billing Address:</Label>
              <Line $w={211} $top={18} />
            </Row>
            <Row $h={15}>
              <Label $w={39} $ml={1} $top={2}>Terms:</Label>
              <Line $w={261} $top={13} />
            </Row>
          </LeftCol>
          <RightCol>
            <WhiteBox $w={110} $h={132} $ml={1} $top={2} />
            <Button $h={47} $ml={1} $top={8}>
              <SaveIcon />
              Save
            </Button>
            <Button $h={21} $top={1}>Attachments</Button>
            <Button $h={21} $top={2}>Exit</Button>
          </RightCol>
        </Columns>
      </FormBody>
    </FormInner>
  </FormFrame>
)

const AddEntries = () => (
  <AddWindow>
    <TitleBar>
      Add Entries
      <CloseButton><CloseGlyph /></CloseButton>
    </TitleBar>
    <EntryBox>
      <Entry $w={50} $shift={-4}><EmployeeIcon />Employee</Entry>
      <Entry $w={41}><FacilityIcon />Facility</Entry>
      <Entry $w={66} $shift={-3}><AssignmentIcon />Assignment</Entry>
    </EntryBox>
  </AddWindow>
)

const AxpoasPanel = () => (
  <Panel>
    <WaveSvg viewBox="0 0 187 468" preserveAspectRatio="none">
      <path d="M0 305 C60 312 120 305 187 272 L187 468 L0 468 Z" fill="#1f2b45" />
    </WaveSvg>
    <PanelTitle>
      AXPOAS
      <PanelClose />
    </PanelTitle>
    <SearchBar>
      <SearchInput>donna</SearchInput>
    </SearchBar>
    <List>
      <WaveSvg viewBox="0 0 173 361" preserveAspectRatio="none">
        <path d="M0 240 C50 247 110 240 173 210 L173 361 L0 361 Z" fill="#c8d4ec" />
      </WaveSvg>
      <ListRow>
        <PersonIcon />
        BAÑEZ, Donna Karen
      </ListRow>
    </List>
    <PanelFooter>
      <AddIcon />
      <FindIcon />
    </PanelFooter>
  </Panel>
)

export default function App() {
  return (
    <Screen>
      <GlobalStyle />
      <IconGrid>
        {desktopIcons.map((item, idx) => <DesktopIcon key={idx} item={item} />)}
      </IconGrid>
      <DesktopIcon
        $free
        $x={974}
        $y={476}
        item={{ label: 'Shortcut to Biometric ...', icon: <FingerIcon />, shortcut: true }}
      />
      <StrayLetter>F</StrayLetter>
      <FacilityForm />
      <AddEntries />
      <AxpoasPanel />
      <Taskbar>
        <StartButton><FlagIcon />Start</StartButton>
        {taskButtons.map(btn => (
          <TaskButton key={btn.label} $active={btn.active}>
            {btn.icon}
            {btn.label}
          </TaskButton>
        ))}
        <Tray>
          <TrayChevron>«</TrayChevron>
          <TrayIcons>
            <ShieldIcon color="#d02030" mark="x" />
            <ShieldIcon color="#f0d020" mark="!" />
          </TrayIcons>
          <TrayTime>6:30 PM</TrayTime>
        </Tray>
      </Taskbar>
    </Screen>
  )
}
